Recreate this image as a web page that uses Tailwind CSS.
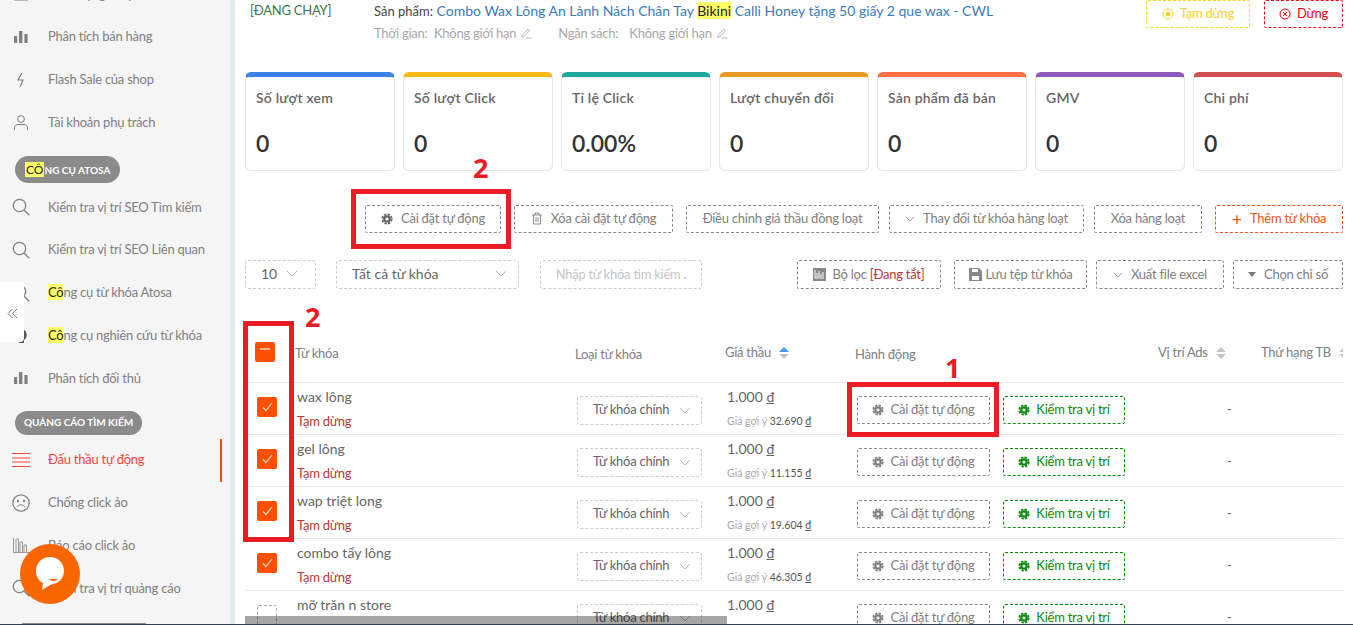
<!DOCTYPE html>
<html lang="en">
<head>
    <meta charset="UTF-8">
    <title>Đấu thầu tự động</title>
    <script src="https://cdn.jsdelivr.net/npm/@tailwindcss/browser@4"></script>
</head>
<body class="bg-white">
<svg class="hidden">
    <symbol id="gear" viewBox="0 0 16 16"><circle cx="8" cy="8" r="3.6" fill="none" stroke="currentColor" stroke-width="3"/><circle cx="8" cy="8" r="6.200" fill="none" stroke="currentColor" stroke-width="2.4" stroke-dasharray="3.2 1.670"/></symbol>
    <symbol id="search" viewBox="0 0 18 18"><circle cx="7.5" cy="7.5" r="6.2" fill="none" stroke="currentColor" stroke-width="1.3"/><path d="M12 12l5.2 5.2" stroke="currentColor" stroke-width="1.3"/></symbol>
    <symbol id="bars" viewBox="0 0 14 12"><path d="M0 5h3.2v7H0zM5 0h3.4v12H5zM10.4 3h3.2v9h-3.2z" fill="currentColor"/></symbol>
    <symbol id="chev" viewBox="0 0 12 7"><path d="M1 1l5 5 5-5" fill="none" stroke="currentColor" stroke-width="1"/></symbol>
    <symbol id="pen" viewBox="0 0 12 12"><path d="M2 8.5L8 2l1.6 1.5L3.5 10 1.8 10.3zM6 11h5.5" fill="none" stroke="currentColor" stroke-width=".8"/></symbol>
</svg>

<div class="relative flex h-[625px] w-[1353px] overflow-hidden font-['Lato','Open_Sans',sans-serif] text-[13px] tracking-[-0.25px]">

    <!-- Sidebar -->
    <aside class="w-[230px] shrink-0 overflow-hidden bg-[#f5f5f6] text-[#808080]">
        <div id="sidebar" class="-mt-[27px]"></div>
    </aside>
    <div class="w-[5px] shrink-0 bg-[#e3e9f1]"></div>

    <!-- Main -->
    <main class="w-[1118px] shrink-0 pl-[10px] pr-[10px]">
        <!-- Campaign header -->
        <div class="flex h-[72px] items-start">
            <div class="ml-[5px] w-[124px] leading-[20px] text-[#3b7a3f]">[ĐANG CHẠY]</div>
            <div class="w-[772px] pt-px leading-[20px]">
                <div class="whitespace-nowrap text-[14px] tracking-normal text-[#444]"><span class="text-[13px]">Sản phẩm:</span> <span class="text-[#3b7cb8]">Combo Wax Lông An Lành Nách Chân Tay <span class="bg-[#ffff66] text-[#222]">Bikini</span> Calli Honey tặng 50 giấy 2 que wax - CWL</span></div>
                <div class="mt-[2px] flex items-center whitespace-nowrap text-[#a8a8a8]">
                    <span class="w-[60px]">Thời gian:</span><span>Không giới hạn</span><svg class="ml-1 h-3 w-3"><use href="#pen"/></svg>
                    <span class="ml-[26px] w-[71px]">Ngân sách:</span><span>Không giới hạn</span><svg class="ml-1 h-3 w-3"><use href="#pen"/></svg>
                </div>
            </div>
            <div class="flex h-[28px] w-[104px] items-center justify-center gap-1.5 rounded-[2px] border border-dashed border-[#f7d51d] text-[#f5d328]">
                <svg class="h-3 w-3" viewBox="0 0 12 12"><circle cx="6" cy="6" r="5" fill="none" stroke="currentColor"/><rect x="4" y="4" width="4" height="4" fill="currentColor"/></svg>Tạm dừng
            </div>
            <div class="ml-[14px] flex h-[28px] w-[79px] items-center justify-center gap-1.5 rounded-[2px] border border-dashed border-[#f5000f] text-[#f5000f]">
                <svg class="h-3 w-3" viewBox="0 0 12 12"><circle cx="6" cy="6" r="5" fill="none" stroke="currentColor"/><path d="M4 4l4 4M8 4l-4 4" stroke="currentColor"/></svg>Dừng
            </div>
        </div>

        <!-- Stat cards -->
        <div id="cards" class="flex gap-2"></div>

        <!-- Bulk actions -->
        <div class="mt-[34px] flex h-[28px] whitespace-nowrap text-[#808080]">
            <div class="ml-[120px] flex w-[136px] items-center justify-center gap-2 rounded-[2px] border border-dashed border-[#888] pb-px"><svg class="h-3 w-3 text-[#666]"><use href="#gear"/></svg>Cài đặt tự động</div>
            <div class="ml-[13px] flex w-[159px] items-center justify-center gap-2 rounded-[2px] border border-dashed border-[#888] pb-px"><svg class="h-[13px] w-[12px]" viewBox="0 0 12 13"><path d="M1 3h10M4 3V1h4v2M2.500 3v9h7V3M5 5v5M7 5v5" fill="none" stroke="currentColor" stroke-width=".9"/></svg>Xóa cài đặt tự động</div>
            <div class="ml-[13px] flex w-[193px] items-center justify-center rounded-[2px] border border-dashed border-[#888] pb-px">Điều chỉnh giá thầu đồng loạt</div>
            <div class="ml-[10px] flex w-[195px] items-center justify-center gap-2 rounded-[2px] border border-dashed border-[#888] pb-px"><svg class="h-[6px] w-[10px]"><use href="#chev"/></svg>Thay đổi từ khóa hàng loạt</div>
            <div class="ml-[10px] flex w-[108px] items-center justify-center rounded-[2px] border border-dashed border-[#888] pb-px">Xóa hàng loạt</div>
            <div class="ml-[13px] flex w-[128px] items-center justify-center gap-2 rounded-[2px] border border-dashed border-[#f4511e] pb-px text-[#f4511e]"><span class="text-[18px] leading-none">+</span>Thêm từ khóa</div>
        </div>

        <!-- Filters -->
        <div class="mt-[27px] flex h-[29px] whitespace-nowrap text-[#808080]">
            <div class="flex w-[71px] items-center justify-between rounded-[3px] border border-dashed border-[#ccc] pb-[2px] pl-[15px] pr-[17px] text-[14px] tracking-normal text-[#666]">10<svg class="h-[7px] w-[12px] text-[#bbb]"><use href="#chev"/></svg></div>
            <div class="ml-[20px] flex w-[183px] items-center justify-between rounded-[3px] border border-dashed border-[#ccc] pb-[2px] pl-[15px] pr-[11px] text-[14px] tracking-normal text-[#666]">Tất cả từ khóa<svg class="h-[7px] w-[12px] text-[#bbb]"><use href="#chev"/></svg></div>
            <div class="ml-[21px] flex w-[162px] items-center justify-center rounded-[3px] border border-dashed border-[#ccc] text-[#c4c4c4]">Nhập từ khóa tìm kiếm .</div>
            <div class="ml-[95px] flex w-[144px] items-center justify-center gap-1.5 rounded-[2px] border border-dashed border-[#888]"><svg class="h-[13px] w-[13px]" viewBox="0 0 13 13"><rect width="13" height="13" fill="#888"/><path d="M2 2v8M2 10h9M4 9V5M6 9V3M8 9V6M10 9V4" stroke="#fff"/></svg><span>Bộ lọc <span class="text-[#b5393c]">[Đang tắt]</span></span></div>
            <div class="ml-[13px] flex w-[133px] items-center justify-center gap-1 rounded-[2px] border border-dashed border-[#888]"><svg class="h-[13px] w-[13px]" viewBox="0 0 13 13"><path d="M0 0h10l3 3v10H0z" fill="#888"/><path d="M3 1h6v3H3zM3 8h7v4H3z" fill="#fff"/></svg>Lưu tệp từ khóa</div>
            <div class="ml-[9px] flex w-[128px] items-center justify-center gap-2 rounded-[2px] border border-dashed border-[#888]"><svg class="h-[6px] w-[10px]"><use href="#chev"/></svg>Xuất file excel</div>
            <div class="ml-[9px] flex w-[110px] items-center justify-center gap-2 rounded-[2px] border border-dashed border-[#888]"><span class="h-0 w-0 border-x-[4px] border-t-[5px] border-x-transparent border-t-[#777]"></span>Chọn chỉ số</div>
        </div>

        <!-- Keyword table -->
        <div class="mt-[32px] w-[1098px] overflow-hidden whitespace-nowrap">
            <div class="grid h-[62px] grid-cols-[50px_280px_150px_130px_303px_103px_82px] items-center border-b border-[#e8e8e8] text-[#808080]">
                <span class="ml-[10px] flex h-[20px] w-[20px] justify-center rounded-[2px] bg-[#fd4f00] pt-[6px]"><span class="h-[2px] w-[10px] bg-[#ffb08c]"></span></span>
                <span class="pt-[4px]">Từ khóa</span>
                <span class="pt-[6px]">Loại từ khóa</span>
                <span class="flex items-center gap-2 pt-[3px]">Giá thầu
                    <span class="flex flex-col gap-[2px]"><span class="h-0 w-0 border-x-[5px] border-b-[5px] border-x-transparent border-b-[#3f9cf0]"></span><span class="h-0 w-0 border-x-[5px] border-t-[5px] border-x-transparent border-t-[#c4c4c4]"></span></span>
                </span>
                <span class="pt-[6px]">Hành động</span>
                <span class="flex items-center gap-2 pt-[3px]">Vị trí Ads
                    <span class="flex flex-col gap-[2px]"><span class="h-0 w-0 border-x-[5px] border-b-[5px] border-x-transparent border-b-[#c4c4c4]"></span><span class="h-0 w-0 border-x-[5px] border-t-[5px] border-x-transparent border-t-[#c4c4c4]"></span></span>
                </span>
                <span class="flex items-center gap-2 pt-[3px]">Thứ hạng TB
                    <span class="flex flex-col gap-[2px]"><span class="h-0 w-0 border-x-[5px] border-b-[5px] border-x-transparent border-b-[#c4c4c4]"></span><span class="h-0 w-0 border-x-[5px] border-t-[5px] border-x-transparent border-t-[#c4c4c4]"></span></span>
                </span>
            </div>
            <div id="rows"></div>
        </div>
    </main>

    <!-- Collapse tab -->
    <div class="absolute left-0 top-[282px] flex h-[60px] w-[24px] items-center justify-center rounded-r-[4px] bg-white pt-[2px] text-[#777]">
        <svg class="h-[11px] w-[11px]" viewBox="0 0 11 11"><path d="M5.500 1L1 5.500 5.500 10M10 1L5.500 5.500 10 10" fill="none" stroke="currentColor"/></svg>
    </div>

    <!-- Chat bubble -->
    <div class="absolute left-[20px] top-[544px] flex h-[60px] w-[60px] items-center justify-center rounded-full bg-[#f96600]">
        <svg class="h-[34px] w-[28px]" viewBox="0 0 28 34"><path d="M14 0C6 0 0 6 0 14c0 6 3 10 7 12l-1 7 9-5.500c7-.5 13-6 13-13.500C28 6 22 0 14 0z" fill="#fff"/><path d="M13 22c2 2.500 7 2.500 9 0z" fill="#f96600"/></svg>
    </div>

    <!-- Horizontal scrollbar -->
    <div class="absolute left-[245px] top-[616px] h-[8px] w-[482px] bg-black/35"></div>
    <div class="absolute bottom-0 left-[22px] h-[2px] w-[124px] bg-[#888]"></div>
    <div class="absolute bottom-0 left-0 h-[1px] w-full bg-[#33404f]"></div>

    <!-- Red annotations -->
    <div class="absolute left-[847px] top-[382px] h-[55px] w-[152px] border-[5px] border-[#ed1c24]"></div>
    <div class="absolute left-[351px] top-[189px] h-[60px] w-[160px] border-[5px] border-[#ed1c24]"></div>
    <div class="absolute left-[243px] top-[321px] h-[221px] w-[51px] border-[5px] border-[#ed1c24]"></div>
    <span class="absolute left-[945px] top-[352px] font-['Open_Sans',sans-serif] text-[27px] font-bold leading-[32px] tracking-normal text-[#ed1c24]">1</span>
    <span class="absolute left-[473px] top-[152px] font-['Open_Sans',sans-serif] text-[27px] font-bold leading-[32px] tracking-normal text-[#ed1c24]">2</span>
    <span class="absolute left-[305px] top-[301px] font-['Open_Sans',sans-serif] text-[27px] font-bold leading-[32px] tracking-normal text-[#ed1c24]">2</span>
</div>

<script>
    // --- sidebar ---
    const hl = t => `<span class="bg-[#ffff66] text-[#222]">${t}</span>`;
    const icons = {
        cal: '<svg class="h-[14px] w-[16px]" viewBox="0 0 16 14"><path d="M1 1h14v12H1zM1 5h14M5 1v12M10 1v12" fill="none" stroke="currentColor"/></svg>',
        bars: '<svg class="h-[12px] w-[14px]"><use href="#bars"/></svg>',
        flash: '<svg class="h-[14px] w-[8px]" viewBox="0 0 8 14"><path d="M5 0L1 7h5l-3 7" fill="none" stroke="currentColor" stroke-width="1.200"/></svg>',
        user: '<svg class="h-[15px] w-[14px]" viewBox="0 0 14 15"><circle cx="7" cy="4" r="3.400" fill="none" stroke="currentColor"/><path d="M.5 15v-2c0-2 1.500-3.500 3.500-3.500h6c2 0 3.500 1.500 3.500 3.500v2" fill="none" stroke="currentColor"/></svg>',
        search: '<svg class="h-[18px] w-[18px]"><use href="#search"/></svg>',
        bulb: '<svg class="h-[14px] w-[12px]" viewBox="0 0 12 14"><path d="M6 0a6 6 0 0 1 3 11v3H4v-3A6 6 0 0 1 6 0z" fill="#555"/></svg>',
        menu: '<svg class="h-[14px] w-[18px]" viewBox="0 0 18 14"><path d="M0 .5h18M0 5h18M0 9h18M0 13.500h18" stroke="currentColor" fill="none"/></svg>',
        sad: '<svg class="h-[18px] w-[18px]" viewBox="0 0 18 18"><circle cx="9" cy="9" r="8.200" fill="none" stroke="currentColor" stroke-width="1.200"/><circle cx="6" cy="7" r="1.200" fill="currentColor"/><circle cx="12" cy="7" r="1.200" fill="currentColor"/><path d="M5 13c2-3 6-3 8 0" fill="none" stroke="currentColor"/></svg>',
        report: '<svg class="h-[15px] w-[17px]" viewBox="0 0 17 15"><path d="M.5 0v14.500H17M3 14V1h2.500v13M7 14V4h2.500v10M11 14V7h2.500v7" fill="none" stroke="currentColor" stroke-width=".8"/></svg>',
    };
    const menu = [
        { icon: 'cal', label: 'Phân hạng shop' },
        { icon: 'bars', label: 'Phân tích bán hàng' },
        { icon: 'flash', label: 'Flash Sale của shop' },
        { icon: 'user', label: 'Tài khoản phụ trách' },
        { chip: '<span class="bg-[#ffff66] px-px text-[12px] font-normal text-[#222]">CÔ</span>NG CỤ ATOSA', cls: 'h-[42px] pt-[12px]', h: 'h-[27px] px-[10px]' },
        { icon: 'search', label: 'Kiểm tra vị trí SEO Tìm kiếm' },
        { icon: 'search', label: 'Kiểm tra vị trí SEO Liên quan' },
        { icon: 'search', label: hl('Cô') + 'ng cụ từ khóa Atosa' },
        { icon: 'bulb', label: hl('Cô') + 'ng cụ nghiên cứu từ khóa' },
        { icon: 'bars', label: 'Phân tích đối thủ' },
        { chip: 'QUẢNG CÁO TÌM KIẾM', cls: 'h-[39px] pt-[11px]', h: 'h-[24px] px-[9px]' },
        { icon: 'menu', label: 'Đấu thầu tự động', active: true },
        { icon: 'sad', label: 'Chống click ảo' },
        { icon: 'report', label: 'Báo cáo click ảo' },
        { icon: 'search', label: 'Kiểm tra vị trí quảng cáo' },
    ];
    document.getElementById('sidebar').innerHTML = menu.map(m => {
        if (m.chip) return `<div class="${m.cls} pl-[15px]"><span class="inline-flex ${m.h} items-center whitespace-nowrap rounded-full bg-[#8b8b8b] text-[10px] font-bold tracking-normal text-white"><span>${m.chip}</span></span></div>`;
        return `<div class="relative flex h-[42.75px] items-center whitespace-nowrap ${m.active ? 'text-[#f4473a]' : ''}">
            <span class="flex w-[48px] justify-center pl-[2px] pr-[8px]">${icons[m.icon]}</span><span>${m.label}</span>
            ${m.active ? '<span class="absolute left-[220px] top-0 h-[43px] w-[2px] bg-[#fd4f00]"></span>' : ''}
        </div>`;
    }).join('');

    // --- stat cards ---
    const cards = [
        ['Số lượt xem', '0', 'border-t-[#3b82e6]'],
        ['Số lượt Click', '0', 'border-t-[#f9b916]'],
        ['Tỉ lệ Click', '0.00%', 'border-t-[#20a99f]'],
        ['Lượt chuyển đổi', '0', 'border-t-[#e89a26]'],
        ['Sản phẩm đã bán', '0', 'border-t-[#fb6f44]'],
        ['GMV', '0', 'border-t-[#8e5bb8]'],
        ['Chi phí', '0', 'border-t-[#d34f4f]'],
    ];
    document.getElementById('cards').innerHTML = cards.map(c => `
        <div class="h-[99px] w-[150px] shrink-0 rounded-[6px] border border-t-[5px] border-[#e6e6e6] ${c[2]} pl-[10px]">
            <div class="mt-[10px] text-[14px] font-semibold tracking-[0.2px] text-[#666]">${c[0]}</div>
            <div class="mt-[20px] text-[23px] font-semibold leading-[30px] tracking-normal text-[#333]">${c[1]}</div>
        </div>`).join('');

    // --- keyword rows ---
    const rows = [
        ['wax lông', '32.690'],
        ['gel lông', '11.155'],
        ['wap triệt long', '19.604'],
        ['combo tẩy lông', '46.305'],
        ['mỡ trăn n store', '20.000', true],
    ];
    document.getElementById('rows').innerHTML = rows.map(r => `
        <div class="grid h-[52px] grid-cols-[50px_280px_150px_130px_303px_103px_82px] items-center border-b border-[#e8e8e8]">
            ${r[2]
                ? '<span class="mb-[4px] ml-[12px] h-[20px] w-[20px] rounded-[2px] border border-dashed border-[#aaa]"></span>'
                : '<span class="mb-[4px] ml-[12px] flex h-[20px] w-[20px] items-center justify-center rounded-[2px] bg-[#fd4f00]"><svg class="h-[10px] w-[11px]" viewBox="0 0 11 10"><path d="M1 5.500L4 8.500 10 1" fill="none" stroke="#ffd9c7" stroke-width="1.200"/></svg></span>'}
            <div class="pl-[2px]">
                <div class="text-[14px] leading-[24px] tracking-normal text-[#666]">${r[0]}</div>
                <div class="leading-[24px] text-[#b5393c]">Tạm dừng</div>
            </div>
            <div class="mt-[3px] pl-[2px]">
                <div class="flex h-[29px] w-[125px] items-center gap-[10px] rounded-[3px] border border-dashed border-[#ccc] pl-[15px] text-[#666]">Từ khóa chính<svg class="h-[7px] w-[12px] text-[#bbb]"><use href="#chev"/></svg></div>
            </div>
            <div class="pl-[2px]">
                <div class="text-[14px] leading-[24px] tracking-normal text-[#666]">1.000 <u>đ</u></div>
                <div class="text-[10.5px] leading-[24px] tracking-normal text-[#555]"><span class="text-[#aaa]">Giá gợi ý</span> ${r[1]} <u>đ</u></div>
            </div>
            <div class="mt-[3px] flex pl-[2px]">
                <div class="flex h-[28px] w-[133px] items-center justify-center gap-1.5 rounded-[2px] border border-dashed border-[#888] text-[#808080]"><svg class="h-3 w-3"><use href="#gear"/></svg>Cài đặt tự động</div>
                <div class="ml-[13px] flex h-[28px] w-[122px] items-center justify-center gap-1.5 rounded-[2px] border border-dashed border-[#0a8a0a] text-[#0a8a0a]"><svg class="h-3 w-3"><use href="#gear"/></svg>Kiểm tra vị trí</div>
            </div>
            <div class="mt-[3px] pl-[69px] text-[#666]">-</div>
            <div></div>
        </div>`).join('');
</script>
</body>
</html>
